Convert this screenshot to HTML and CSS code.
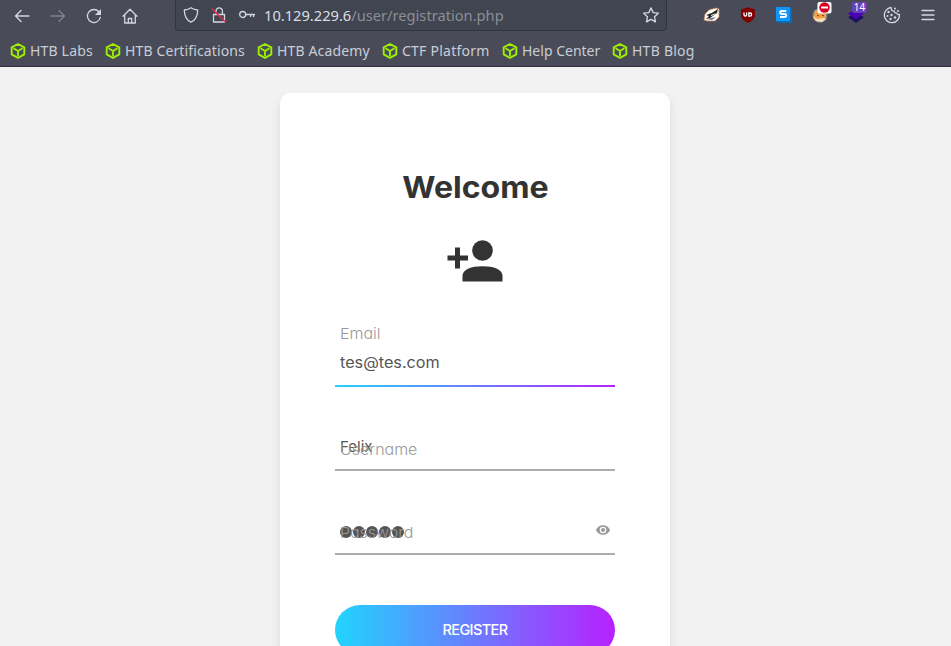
FILE: index.html
```html
<!DOCTYPE html>
<html lang="en">
<head>
<meta charset="utf-8">
<title>Registration</title>
<link rel="stylesheet" href="styles.css">
</head>
<body>
<svg class="defs" aria-hidden="true">
  <symbol id="cube" viewBox="0 0 16 18"><path d="M8 2 14.300 5.400v7L8 15.900 1.700 12.400v-7zM3.500 6.300 8 9l4.500-2.700M8 9v5" fill="none" stroke="#9fef00" stroke-width="1.900" stroke-linejoin="round"/></symbol>
</svg>
<header class="chrome">
  <div class="toolbar">
    <nav class="nav">
      <svg class="ico" viewBox="0 0 16 16"><path d="M15 8H1.5M7 2.5 1.5 8 7 13.5"/></svg>
      <svg class="ico dim" viewBox="0 0 16 16"><path d="M1 8h13.5M9 2.5 14.5 8 9 13.5"/></svg>
      <svg class="ico" viewBox="0 0 16 16"><path d="M14.3 9.3A6.5 6.5 0 1 1 12.8 3.7"/><path class="solid" d="M15 1v6H9z"/></svg>
      <svg class="ico" viewBox="0 0 16 16"><path d="M1 8.3 8 1.3l7 7M2.7 7v8h10.6V7M6.3 15v-4.5h3.4V15"/></svg>
    </nav>
    <div class="urlbar">
      <svg class="ico" viewBox="0 0 16 16"><path d="M8 .8C6 2.3 3.700 2.800 1.300 3c0 5.500 1.700 10 6.700 12.200C13 13 14.700 8.500 14.700 3 12.300 2.800 10 2.300 8 .8z"/></svg>
      <svg class="ico lock" viewBox="0 0 16 16"><path d="M2.500 7.500h11V15h-11zM5 7.500V4a3.200 3.200 0 0 1 6.400 0v3.500"/><path class="slash" d="M1 2l13.500 13"/></svg>
      <svg class="ico key" viewBox="0 0 16 16"><circle cx="3.700" cy="7.500" r="3"/><path d="M6.700 7.500h9M11.700 7.500v2M14.700 7.500v2"/></svg>
      <div class="url">10.129.229.6<span>/user/registration.php</span></div>
      <svg class="ico star" viewBox="0 0 16 16"><path d="m8 .9 2.200 4.700 5.100.6-3.800 3.500 1 5.200L8 12.400l-4.500 2.500 1-5.200L.7 6.200l5.100-.6z"/></svg>
    </div>
    <div class="exts">
      <svg class="ext" viewBox="0 0 18 18"><path d="m1 14 1-6 4-4 7-2 3 1v8l-4 4H4z" fill="#fff" stroke="#c78450" stroke-width=".8"/><path d="M3 9q7-2 12-6l-1 4-7 5-4 1 3-3z" fill="#252424"/><path d="m8 9 5-2-2 2-3 1zM5 5l4-2-3 4z" fill="#f5e8d8"/><path d="m3 13 5-1 5-1-4 3z" fill="#777"/></svg>
      <svg class="ext" viewBox="0 0 18 18"><path d="M9 1.200 16 3.500v5c0 4-3 6.500-7 8.500-4-2-7-4.500-7-8.500v-5z" fill="#800000"/><path d="M5 6.500v2.300q0 1.400 1.300 1.400t1.300-1.400V6.500M9.800 7v3.200h1.200a1.600 1.600 0 0 0 0-3.200z" fill="none" stroke="#fff" stroke-width="1.300"/></svg>
      <svg class="ext" viewBox="0 0 18 18"><path d="M1 1h14l2 2v14H3l-2-2z" fill="#076ab5"/><path d="M1 1h14v14H1z" fill="#0c97ff"/><path d="M11.200 5H7Q5.200 5 5.200 6.500T7 8h2.500q1.700 0 1.700 1.500T9.500 11H5" fill="none" stroke="#fff" stroke-width="1.900"/></svg>
      <svg class="ext" viewBox="0 0 18 18"><circle cx="9" cy="9.500" r="7.300" fill="#7d8b8d"/><path d="m3 9 1-5 4 1 7 2v6l-5 3-5-1-3-3z" fill="#f2a14a"/><path d="m2 10 4 3 6-1 3 1-4 3-6-1z" fill="#f4dfbd"/><path d="m6 9 2 1m3-1 2 1" stroke="#733911"/><rect x="6.500" y="-4" width="14" height="11.500" rx="2" fill="#fff"/><circle cx="13.500" cy="1.500" r="5.200" fill="#d70022"/><path d="M10 1.500h7" stroke="#fff" stroke-width="2"/></svg>
      <div class="layers"><svg class="ext" viewBox="0 0 18 18"><path d="m1 11 8-4 8 4-8 6z" fill="#19105f"/><path d="m1 7.500 8-5 8 5-8 6z" fill="#4b02b5"/></svg><b>14</b></div>
      <svg class="ext ico cookie" viewBox="0 0 18 18"><path d="M8 1.500a7.600 7.600 0 1 0 8.500 7q-2 .5-2.700-1.400-2.400.4-2.300-1.900Q8 5 8 1.500z"/><g class="solid"><circle cx="5.500" cy="6" r="1.200"/><circle cx="4.500" cy="10" r="1"/><circle cx="8.500" cy="9" r="1.200"/><circle cx="7.500" cy="13" r="1.200"/><circle cx="12" cy="11.500" r="1.200"/><circle cx="12" cy="2.500" r="1"/><circle cx="15" cy="5" r="1"/></g></svg>
      <svg class="ext ico" viewBox="0 0 18 18"><path d="M3 4.500h12M3 9h12M3 13.500h12"/></svg>
    </div>
  </div>
  <nav class="bookmarks">
    <a class="bm1"><svg><use href="#cube"/></svg>HTB Labs</a>
    <a class="bm2"><svg><use href="#cube"/></svg>HTB Certifications</a>
    <a class="bm3"><svg><use href="#cube"/></svg>HTB Academy</a>
    <a class="bm4"><svg><use href="#cube"/></svg>CTF Platform</a>
    <a class="bm5"><svg><use href="#cube"/></svg>Help Center</a>
    <a class="bm6"><svg><use href="#cube"/></svg>HTB Blog</a>
  </nav>
</header>
<main class="page">
  <form class="card">
    <h1><span>Welcome</span></h1>
    <svg class="person" viewBox="0 0 56 42"><path d="M8 7.500h5v8h8v5h-8v8H8v-8H.5v-5H8z"/><circle cx="35.500" cy="10.500" r="10.300"/><path d="M15.500 41.500V35q2-8.700 20-8.700t20 8.700v6.500z"/></svg>
    <div class="field focused"><span class="label email">Email</span><span class="value mail">tes@tes.com</span></div>
    <div class="field"><span class="value felix">Felix</span><span class="label user">Username</span></div>
    <div class="field"><span class="dots"><i></i><i></i><i></i><i></i><i></i></span><span class="label pass">Password</span>
      <svg class="eye" viewBox="0 0 14 10"><path fill-rule="evenodd" d="M0 5Q2 .2 7 .2T14 5q-2 4.800-7 4.800T0 5zm3.700 0a3.300 3.300 0 1 0 6.600 0 3.300 3.300 0 0 0-6.600 0z"/><circle cx="7" cy="5" r="2"/></svg></div>
    <button type="button" class="register"><span>REGISTER</span></button>
  </form>
</main>
</body>
</html>
```
FILE: styles.css
```css
* { box-sizing: border-box; }
html, body { margin: 0; height: 646px; overflow: hidden; }
body { background: #f2f2f2; font-family: Inter, "Liberation Sans", sans-serif; }
.defs { display: none; }
.chrome { height: 67px; background: #494c58; border-bottom: 1px solid #30303d; font-family: "Noto Sans", sans-serif; }
.toolbar { height: 31px; display: flex; }
.nav { width: 175px; padding: 8px 0 0 14px; display: flex; gap: 20px; }
.ico { width: 16px; height: 16px; flex: none; fill: none; stroke: #d3d7df; stroke-width: 1.300; stroke-linejoin: round; stroke-linecap: round; }
.dim { opacity: .4; }
.solid { fill: #d3d7df; stroke: none; }
.urlbar { width: 492px; height: 31px; display: flex; align-items: center; padding: 0 7px; background: #404550; border: 1px solid #303440; border-top: 0; border-radius: 0 0 4px 4px; }
.lock { margin-left: 12px; }
.slash { stroke: #e22850; stroke-width: 1.500; }
.key { margin-left: 12px; }
.url { margin-left: 9px; flex: 1; font-size: 14.670px; line-height: 30px; color: #d9dde5; white-space: nowrap; }
.url span { color: #8b8f99; }
.exts { display: flex; padding: 6px 0 0 36px; gap: 18px; }
.ext { width: 18px; height: 18px; overflow: visible; flex: none; display: block; }
.layers { position: relative; width: 18px; }
.layers b { position: absolute; left: 5px; top: -4px; width: 15px; height: 11px; border-radius: 2px; background: #6842b8; color: #fff; font-size: 10px; font-weight: 400; line-height: 11px; text-align: center; }
.bookmarks { height: 35px; display: flex; padding-left: 10px; font-size: 14px; line-height: 39px; color: #c9cdd6; }
.bookmarks a { display: flex; white-space: nowrap; }
.bookmarks svg { width: 16px; height: 18px; margin: 11px 4px 0 0; flex: none; }
.bm1 { width: 95px; letter-spacing: .18px; }
.bm2 { width: 152px; letter-spacing: .13px; }
.bm3 { width: 125px; letter-spacing: .15px; }
.bm4 { width: 120px; letter-spacing: .24px; }
.bm5 { width: 110px; }
.bm6 { letter-spacing: .25px; }
.page { height: 579px; padding-top: 26px; overflow: hidden; }
.card { width: 390px; height: 680px; margin-left: 280px; padding: 75px 55px 0; background: #fff; border-radius: 10px; box-shadow: 0 5px 10px rgba(0,0,0,.1); }
h1 { margin: 0; font-size: 30px; line-height: 39px; height: 39px; font-weight: 700; color: #333; text-align: center; }
h1 span { display: inline-block; transform: scaleX(1.07); }
.person { display: block; width: 56px; height: 42px; margin: 33px 0 0 112px; fill: #333; }
.field { position: relative; height: 45px; margin-bottom: 39px; border-bottom: 2px solid #adadad; font-size: 15px; line-height: 22px; white-space: nowrap; font-feature-settings: "cv11"; }
.field.focused { margin-top: 60px; border-bottom: 0; background: linear-gradient(90deg, #21d4fd, #b721ff) 0 100% / 100% 2px no-repeat; }
.label, .value, .dots { position: absolute; left: 5px; }
.label, .value { transform-origin: 0 50%; }
.label { top: 13px; color: #999; font-weight: 300; transform: scaleX(1.065); }
.value { top: 10px; color: #555; }
.label.email { top: -19px; }
.mail { transform: scaleX(1.08); }
.dots { top: 16px; display: flex; gap: 1px; }
.label.pass { top: 12px; }
.dots i { width: 12px; height: 12px; border-radius: 50%; background: #555; }
.eye { position: absolute; right: 5px; top: 15px; width: 14px; height: 10px; fill: #999; }
.register { display: block; width: 280px; height: 50px; margin-top: 50px; padding: 0; border: 0; border-radius: 25px; background: linear-gradient(90deg, #21d4fd, #b721ff); color: #fff; font: 500 14.500px/50px Inter, sans-serif; letter-spacing: -.6px; }
```
